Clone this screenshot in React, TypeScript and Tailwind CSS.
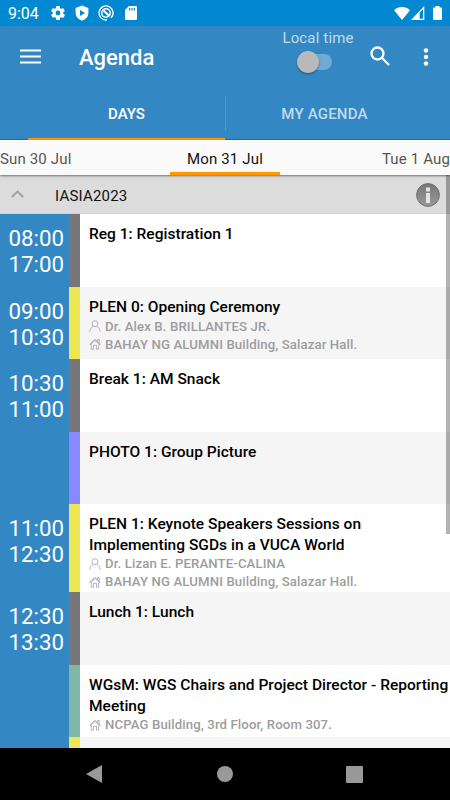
import { clsx } from 'clsx';

type Session = {
  title: string;
  start?: string;
  end?: string;
  speaker?: string;
  place?: string;
  color: string;
  height: string;
};

const SESSIONS: Session[] = [
  { title: 'Reg 1: Registration 1', start: '08:00', end: '17:00', color: 'bg-[#77777b]', height: 'h-[73px]' },
  {
    title: 'PLEN 0: Opening Ceremony',
    start: '09:00',
    end: '10:30',
    speaker: 'Dr. Alex B. BRILLANTES JR.',
    place: 'BAHAY NG ALUMNI Building, Salazar Hall.',
    color: 'bg-[#eee653]',
    height: 'h-[72px]',
  },
  { title: 'Break 1: AM Snack', start: '10:30', end: '11:00', color: 'bg-[#77777b]', height: 'h-[73px]' },
  { title: 'PHOTO 1: Group Picture', color: 'bg-[#8a88ff]', height: 'h-[72px]' },
  {
    title: 'PLEN 1: Keynote Speakers Sessions on Implementing SGDs in a VUCA World',
    start: '11:00',
    end: '12:30',
    speaker: 'Dr. Lizan E. PERANTE-CALINA',
    place: 'BAHAY NG ALUMNI Building, Salazar Hall.',
    color: 'bg-[#eee653]',
    height: 'h-[88px]',
  },
  { title: 'Lunch 1: Lunch', start: '12:30', end: '13:30', color: 'bg-[#77777b]', height: 'h-[73px]' },
  {
    title: 'WGsM: WGS Chairs and Project Director - Reporting Meeting',
    place: 'NCPAG Building, 3rd Floor, Room 307.',
    color: 'bg-[#7fb8a4]',
    height: 'h-[72px]',
  },
  { title: '', color: 'bg-[#eee653]', height: 'h-[11px]' },
];

const PersonIcon = () => (
  <svg viewBox="0 0 12 12" className="-mt-px h-3 w-3 shrink-0" fill="none" stroke="#9a9aa0" strokeWidth="0.7">
    <circle cx="6" cy="3.7" r="3" />
    <path d="M.8 11.8c.2-2.900 1.500-4.500 3.600-5.400M11.200 11.800c-.2-2.900-1.500-4.500-3.600-5.400" />
  </svg>
);

const HouseIcon = () => (
  <svg viewBox="0 0 12 12" className="-mt-px h-3 w-3 shrink-0" fill="none" stroke="#85858c" strokeWidth="0.6">
    <path d="M.5 6.300 6 1.300l5.500 5M.9 7 6 2.500 11.100 7M8.600 3.200V1.500h1.600v3.200M2.300 6.500v4.700h2.200V7.300h3v3.900h2.200V6.500" />
  </svg>
);

const StatusBar = () => (
  <div className="flex h-[26px] items-center bg-[#0288d1] pr-2 pl-[8px] text-white">
    <span className="w-[43px] pt-[2px] text-[16px] leading-none">9:04</span>
    <svg viewBox="2 2 20 20" className="h-[14px] w-[14px]" fill="currentColor">
      <path d="M19.4 13a7.5 7.5 0 0 0 0-2l2.1-1.6a.5.5 0 0 0 .1-.6l-2-3.5a.5.5 0 0 0-.6-.2l-2.5 1a7.3 7.3 0 0 0-1.7-1l-.4-2.6A.5.5 0 0 0 14 2h-4a.5.5 0 0 0-.5.4L9.100 5.100a7.300 7.300 0 0 0-1.700 1l-2.500-1a.5.5 0 0 0-.6.2l-2 3.500a.5.5 0 0 0 .1.6L4.600 11a7.500 7.500 0 0 0 0 2l-2.100 1.600a.5.5 0 0 0-.1.6l2 3.500c.1.2.4.3.6.2l2.500-1a7.300 7.300 0 0 0 1.700 1l.4 2.600c0 .3.2.5.5.5h4c.2 0 .5-.2.5-.4l.4-2.700a7.300 7.300 0 0 0 1.700-1l2.500 1c.2.1.5 0 .6-.2l2-3.500a.5.5 0 0 0-.1-.6zM12 15.500a3.500 3.500 0 1 1 0-7 3.500 3.500 0 0 1 0 7z" />
    </svg>
    <svg viewBox="0 0 14 16" className="ml-[10px] h-[16px] w-[14px]">
      <path d="M7 .5 13.400 3v5c0 3.600-2.600 6.300-6.400 7.700C3.200 14.300.6 11.600.6 8V3z" fill="currentColor" />
      <path d="M5 5v6l5-3z" fill="#0288d1" />
    </svg>
    <svg viewBox="0 0 16 16" className="ml-[9px] h-[16px] w-[16px]" fill="none" stroke="currentColor">
      <path d="M9 14.900A7 7 0 1 1 13 12.900" strokeWidth="1.300" />
      <circle cx="8" cy="8" r="4.300" strokeWidth="1.500" />
      <path d="m5.500 5.500 5.500 5.300" strokeWidth="2" />
    </svg>
    <svg viewBox="0 0 12 14" className="ml-[11px] h-[14px] w-[12px]">
      <path d="M4 0h7a1 1 0 0 1 1 1v12a1 1 0 0 1-1 1H1a1 1 0 0 1-1-1V4z" fill="currentColor" />
      <path d="M4.600 2v2.600M7 2v2.600M9.400 2v2.600" stroke="#0288d1" strokeWidth="1.200" />
    </svg>
    <svg viewBox="0 0 16 13" className="ml-auto h-[13px] w-[16px]" fill="currentColor">
      <path d="M8 13 0 3.200C2.200 1.200 5 0 8 0s5.800 1.200 8 3.200z" />
    </svg>
    <svg viewBox="0 0 14 14" className="ml-[1px] h-[14px] w-[14px]">
      <path d="M13.300 0v14H0z" fill="currentColor" />
      <path d="M12 3.300v9.400H8.700V6.600z" fill="#0288d1" />
    </svg>
    <svg viewBox="0 0 9 14" className="ml-[8px] h-[14px] w-[9px]" fill="currentColor">
      <path d="M2.500 0h4v1.400H8a1 1 0 0 1 1 1V13a1 1 0 0 1-1 1H1a1 1 0 0 1-1-1V2.400a1 1 0 0 1 1-1h1.500z" />
    </svg>
  </div>
);

const Toolbar = () => (
  <div className="flex h-[63px] items-start bg-[#3387c3] text-white">
    <svg viewBox="0 0 21 15" className="mt-[23px] ml-5 h-[15px] w-[21px]" stroke="currentColor" strokeWidth="2">
      <path d="M0 1.500h21M0 7.500h21M0 13.500h21" />
    </svg>
    <h1 className="mt-[19px] ml-[38px] text-[22px] leading-[26px] font-medium">Agenda</h1>
    <div className="mt-[3px] mr-[2px] ml-auto flex w-[74px] flex-col items-center">
      <span className="text-[15px] leading-[18px] tracking-[0.15px] whitespace-nowrap text-[#bfdbed]">Local time</span>
      <div className="mt-[4px] mr-[8px] flex h-[22px] w-[35px] items-center">
        <span className="z-10 h-[22px] w-[22px] shrink-0 rounded-full bg-[#b9b9b9] shadow-[0_1px_2px_rgba(0,0,0,0.4)]" />
        <span className="-ml-3 h-4 w-[25px] shrink-0 rounded-r-full bg-[#70a9d5]" />
      </div>
    </div>
    <svg viewBox="0 0 20 20" className="mt-[20px] ml-[13px] h-5 w-5" fill="none" stroke="currentColor" strokeWidth="2.300">
      <circle cx="7.500" cy="7.500" r="6" />
      <path d="m11.800 11.800 7.200 7.200" />
    </svg>
    <svg viewBox="0 0 6 20" className="mt-[21px] mr-[21px] ml-[33px] h-5 w-[6px]" fill="currentColor">
      <circle cx="3" cy="3.500" r="2.200" />
      <circle cx="3" cy="10" r="2.200" />
      <circle cx="3" cy="16.500" r="2.200" />
    </svg>
  </div>
);

const Tabs = () => (
  <div className="flex h-[51px] border-b border-[#0d75bd] bg-[#3387c3] pl-7 text-[15px] font-medium">
    <div className="-mb-px flex w-[197px] items-center justify-center border-b-2 border-[#ff9800] pt-[2px] text-white">
      DAYS
    </div>
    <div className="mt-[7px] h-[35px] w-px bg-[#4e98cd]" />
    <div className="flex w-[197px] items-center justify-center pt-px tracking-[0.2px] text-[#bfdbed]">MY AGENDA</div>
  </div>
);

const DayStrip = () => (
  <div className="relative z-10 flex h-[35px] justify-between bg-[#fafafa] text-[15px] leading-[38px] tracking-[0.15px] text-[#555] shadow-[0_1px_2px_rgba(0,0,0,0.5)]">
    <span className="w-[170px]">Sun 30 Jul</span>
    <span className="w-[110px] border-b-[3px] border-[#ff9800] text-center text-[#111]">Mon 31 Jul</span>
    <span className="w-[170px] text-right">Tue 1 Aug</span>
  </div>
);

const SectionHeader = () => (
  <div className="flex h-[39px] items-center border-b border-[#d2d2d2] bg-[#dcdcdc] pr-[10px] pl-[11px]">
    <svg viewBox="0 0 13 8" className="h-2 w-[13px]" fill="none" stroke="#a0a0a0" strokeWidth="1.800">
      <path d="m.8 7 5.700-5.500L12.200 7" />
    </svg>
    <span className="ml-[31px] pt-[4px] text-[15px] tracking-[0.2px] text-[#111]">IASIA2023</span>
    <svg viewBox="0 0 24 24" className="mt-px ml-auto h-6 w-6">
      <defs>
        <linearGradient id="info" x2="0" y2="1">
          <stop offset="0" stopColor="#777" />
          <stop offset="1" stopColor="#999" />
        </linearGradient>
      </defs>
      <circle cx="12" cy="12" r="11.400" fill="url(#info)" stroke="#707070" />
      <path d="M10 4.500h4v4h-4zM10 10h4v10h-4z" fill="#e4e4e4" />
    </svg>
  </div>
);

const SessionRow = ({ session, shaded }: { session: Session; shaded: boolean }) => (
  <div className={clsx('flex shrink-0', session.height)}>
    <div className="w-[69px] bg-[#3387c3] pt-[11px] pr-[5px] text-right text-[22.300px] leading-[26px] text-white">
      <div>{session.start}</div>
      <div>{session.end}</div>
    </div>
    <div className={clsx('w-[11px]', session.color)} />
    <div className={clsx('flex-1 overflow-hidden pt-[10px] pl-[9px]', shaded ? 'bg-[#f5f5f5]' : 'bg-white')}>
      <div className="-mr-1 text-[15.500px] leading-[20.500px] font-medium tracking-[0.02px] text-black">
        {session.title}
      </div>
      {session.speaker && (
        <div className="flex h-[18px] items-center gap-1 text-[13.200px] font-medium tracking-[0.11px] text-[#9d9d9d]">
          <PersonIcon />
          {session.speaker}
        </div>
      )}
      {session.place && (
        <div className="flex h-[18px] items-center gap-1 text-[13.200px] font-medium tracking-[0.11px] text-[#9d9d9d]">
          <HouseIcon />
          {session.place}
        </div>
      )}
    </div>
  </div>
);

const NavBar = () => (
  <div className="flex h-[52px] items-center justify-between bg-black pr-[87px] pl-[86px] text-[#999]">
    <svg viewBox="0 0 16 18" className="h-[18px] w-4" fill="currentColor">
      <path d="M16 0v18L0 9z" />
    </svg>
    <span className="ml-[2px] h-4 w-4 rounded-full bg-[#999]" />
    <span className="h-[17px] w-[17px] rounded-[1px] bg-[#999]" />
  </div>
);

export default function App() {
  return (
    <div className="h-[800px] w-[450px] overflow-hidden bg-white font-[Roboto,sans-serif]">
      <StatusBar />
      <Toolbar />
      <Tabs />
      <DayStrip />
      <div className="relative h-[573px] overflow-hidden">
        <SectionHeader />
        {SESSIONS.map((session, i) => (
          <SessionRow key={i} session={session} shaded={i % 2 === 1} />
        ))}
        <div className="absolute top-0 right-0 h-[359px] w-[4.500px] bg-black/30" />
      </div>
      <NavBar />
    </div>
  );
}
